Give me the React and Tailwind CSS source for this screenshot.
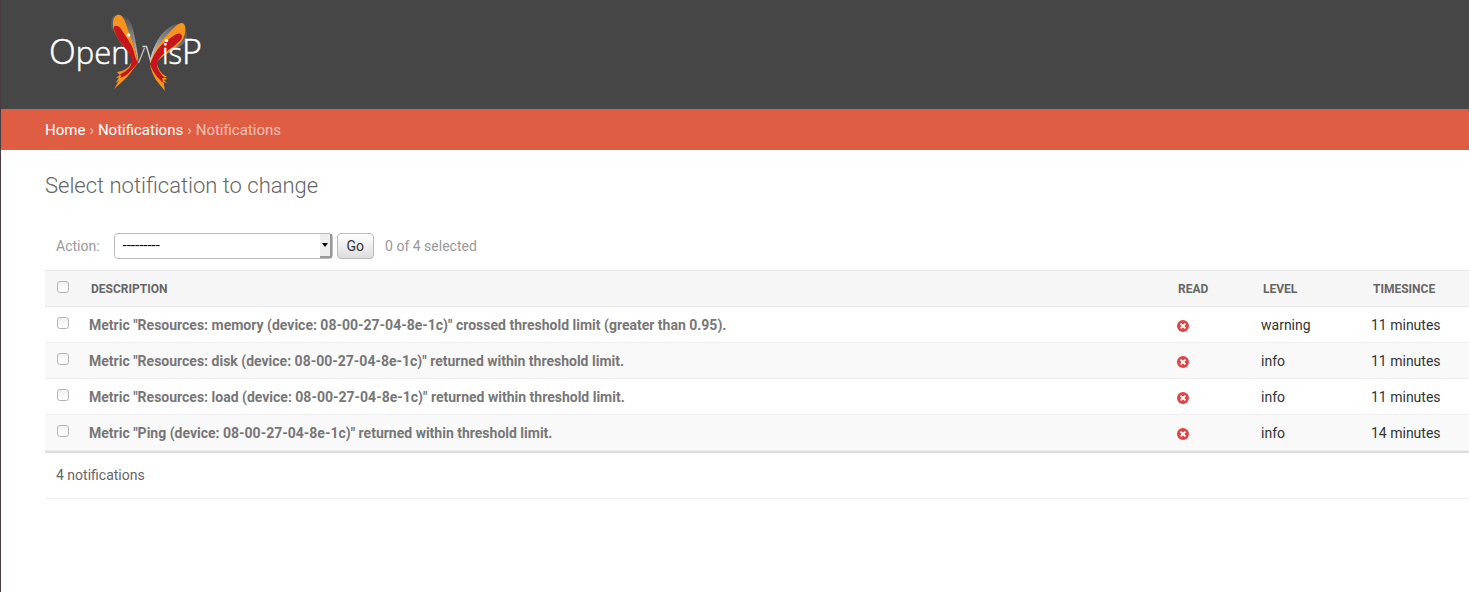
const notifications = [
  { text: 'Metric "Resources: memory (device: 08-00-27-04-8e-1c)" crossed threshold limit (greater than 0.95).', level: 'warning', since: '11 minutes' },
  { text: 'Metric "Resources: disk (device: 08-00-27-04-8e-1c)" returned within threshold limit.', level: 'info', since: '11 minutes' },
  { text: 'Metric "Resources: load (device: 08-00-27-04-8e-1c)" returned within threshold limit.', level: 'info', since: '11 minutes' },
  { text: 'Metric "Ping (device: 08-00-27-04-8e-1c)" returned within threshold limit.', level: 'info', since: '14 minutes' },
];

function Logo() {
  return (
    <svg width="156" height="82" viewBox="48 12 156 82" role="img" aria-label="OpenWISP">
      <defs>
        <linearGradient id="leftShade" x1="0" y1="0" x2="0" y2="1">
          <stop offset="0" stopColor="#505050" />
          <stop offset="0.5" stopColor="#8a8a8a" />
          <stop offset="1" stopColor="#d8d8d8" />
        </linearGradient>
        <linearGradient id="rightShade" x1="1" y1="0" x2="0" y2="1">
          <stop offset="0" stopColor="#505050" />
          <stop offset="0.5" stopColor="#858585" />
          <stop offset="1" stopColor="#d8d8d8" />
        </linearGradient>
      </defs>
      <text x="49" y="64" fill="#fff" stroke="#fff" strokeWidth="0.5" fontFamily="'Open Sans', sans-serif" fontWeight="300" fontSize="31">
        <tspan fontSize="35">O</tspan>pen
      </text>
      <path d="M138.500 63 L144.500 48" fill="none" stroke="#c8c8c8" strokeWidth="1.200" />
      <path d="M142.500 46.500 h4 L151.500 64" fill="none" stroke="#d0d0d0" strokeWidth="1.400" />
      <path d="M123 17 C129 16 132 24 134 33 C136 44 138 54 138.500 62 L134 46Z" fill="url(#leftShade)" />
      <path d="M112 31 C110 22 111 17 115 15 L116 24Z" fill="#5c5c5c" />
      <path d="M150 63 C151 49 161 33 170 28 C178 24 188 27 187 36 C186 43 181 46 177 48Z" fill="url(#rightShade)" />
      <path d="M150 63 C152 49 158 36 167 29 C174 24 182 21 185 26 L176 28 C164 36 156 48 150 63Z" fill="url(#rightShade)" />
      <path d="M138 64 C130 54 120 44 115 33 C112 26 112 17 117 15 C122 13 125 20 127 27 C131 38 136 49 138 64Z" fill="#f7941d" />
      <path d="M138 63 C133 69 129 76 124 80 L114 89 L119 80.500 L115.500 83 L119 77.500 L116 78 L119.500 75 L117 72 C124 71 129 68 131 63Z" fill="#f7941d" />
      <path d="M114 29 C113 25 118 24.500 121 29 C126 37 133 45 134.500 54 C135 58 137 61 138 63 C133 68 130 72 125 76 L120 78 L121.500 75.500 L119 75 C125 72 131 68 131.500 63 C132 55 126 49 121 43 C117 38 115 33 114 29Z" fill="#c4161c" />
      <path d="M150 64 C152 55 159 43 167 35 C173 28 181 20 184 24 C187 28 185 38 180 43 C173 51 162 54 156 64Z" fill="#f7941d" />
      <path d="M150 65 L157 64 C159 71 162 74 167 77 L164 77.500 L167.500 79 L164 80 L167 83 L163.500 82 L165 91 L156 80 C153 75 151 70 150 65Z" fill="#f7941d" />
      <path d="M150 64 C153 56 158 47 165 42 C171 38 177 32 180.500 34 C185 37 179 42 174 46 C167 51 158 57 157 64 C157 70 162 75 165 78 L162 78 L163.500 83 C156 77 152 70 150 64Z" fill="#c4161c" />
      <text x="162" y="64" fill="#fff" stroke="#fff" strokeWidth="0.5" fontFamily="'Open Sans', sans-serif" fontWeight="300" fontSize="29">
        is<tspan fontSize="34">P</tspan>
      </text>
      <circle cx="128.500" cy="35" r="1.800" fill="#fff" />
      <circle cx="166.500" cy="40.500" r="1.800" fill="#fff" />
    </svg>
  );
}

function NoIcon() {
  return (
    <svg width="12" height="12" viewBox="0 0 12 12" role="img" aria-label="False">
      <circle cx="6" cy="6" r="6" fill="#dd4646" />
      <path d="M3.600 3.600 L8.400 8.400 M8.400 3.600 L3.600 8.400" stroke="#fff" strokeWidth="2" />
    </svg>
  );
}

function Check({ label }) {
  return (
    <input
      type="checkbox"
      aria-label={label}
      className="block size-3 appearance-none rounded-[3px] border border-[#b5b5b5] bg-linear-to-b from-[#f2f2f2] to-white checked:bg-[#79aec8]"
    />
  );
}

export default function App() {
  return (
    <div className="min-h-screen border-l border-[#4a3b3f] bg-white font-['Roboto',sans-serif] text-sm text-[#333]">
      <header className="bg-[#464646] px-[47px] pt-3 pb-[15px]">
        <a href="#home" className="block w-fit">
          <Logo />
        </a>
      </header>

      <nav aria-label="Breadcrumbs" className="flex gap-1 bg-[#df5d43] px-11 pt-[11px] pb-[9px] text-[15px] leading-[21px] text-[#f9c4b8]">
        <a href="#home" className="text-white">Home</a>
        <span>›</span>
        <a href="#notifications" className="text-white">Notifications</a>
        <span>›</span>
        <span>Notifications</span>
      </nav>

      <main className="pt-5 pl-11">
        <h1 className="text-[22px] leading-8 font-light text-[#666]">Select notification to change</h1>

        <form className="mt-[31px] flex items-center pl-[11px] text-[#999]" onSubmit={(e) => e.preventDefault()}>
          <label htmlFor="action" className="mr-[14px]">Action:</label>
          <div className="relative mr-1 w-[219px]">
            <select id="action" className="block h-[26px] w-full appearance-none rounded border border-[#bbb] bg-white px-2 text-[15px] text-black">
              <option>---------</option>
              <option>Delete selected notifications</option>
            </select>
            <span className="pointer-events-none absolute inset-y-px right-px flex w-3 items-center justify-center border-r-2 border-b-2 border-[#999] bg-[#eee]">
              <svg width="6" height="4" viewBox="0 0 6 4" aria-hidden="true">
                <path d="M0 0H6L3 4Z" fill="#000" />
              </svg>
            </span>
          </div>
          <button type="submit" className="mr-[11px] h-[26px] rounded border border-[#bbb] bg-linear-to-b from-white to-[#ddd] px-[9px] text-[#333]">Go</button>
          <span>0 of 4 selected</span>
        </form>

        <table className="mt-[11px] w-full table-fixed border-separate border-spacing-0 text-left">
          <colgroup>
            <col className="w-9" />
            <col />
            <col className="w-[84px]" />
            <col className="w-[110px]" />
            <col className="w-[106px]" />
          </colgroup>
          <thead className="bg-[#f6f6f6] text-xs text-[#666] uppercase [&_th]:border-y [&_th]:border-[#e8e8e8]">
            <tr className="h-[37px]">
              <th className="pb-1 pl-3"><Check label="Select all notifications" /></th>
              <th className="px-[10px] font-bold">Description</th>
              <th className="px-[9px] font-bold">Read</th>
              <th className="px-[10px] font-bold">Level</th>
              <th className="px-[10px] font-bold">Timesince</th>
            </tr>
          </thead>
          <tbody className="[&_td]:border-b [&_td]:border-[#eee] [&_th]:border-b [&_th]:border-[#eee]">
            {notifications.map((n, i) => (
              <tr key={n.text} className="h-9 even:bg-[#f9f9f9]">
                <td className="pb-1 pl-3"><Check label={`Select notification ${i + 1}`} /></td>
                <th className="px-2 font-bold whitespace-nowrap">
                  <a href={`#notification-${i + 1}`} className="text-[#777]">{n.text}</a>
                </th>
                <td className="px-2 pt-[2px]"><NoIcon /></td>
                <td className="px-2">{n.level}</td>
                <td className="px-2">{n.since}</td>
              </tr>
            ))}
          </tbody>
        </table>
        <p className="border-t-2 border-b border-t-[#ddd] border-b-[#eee] px-[11px] py-3 leading-[21px] text-[#666]">4 notifications</p>
      </main>
    </div>
  );
}
